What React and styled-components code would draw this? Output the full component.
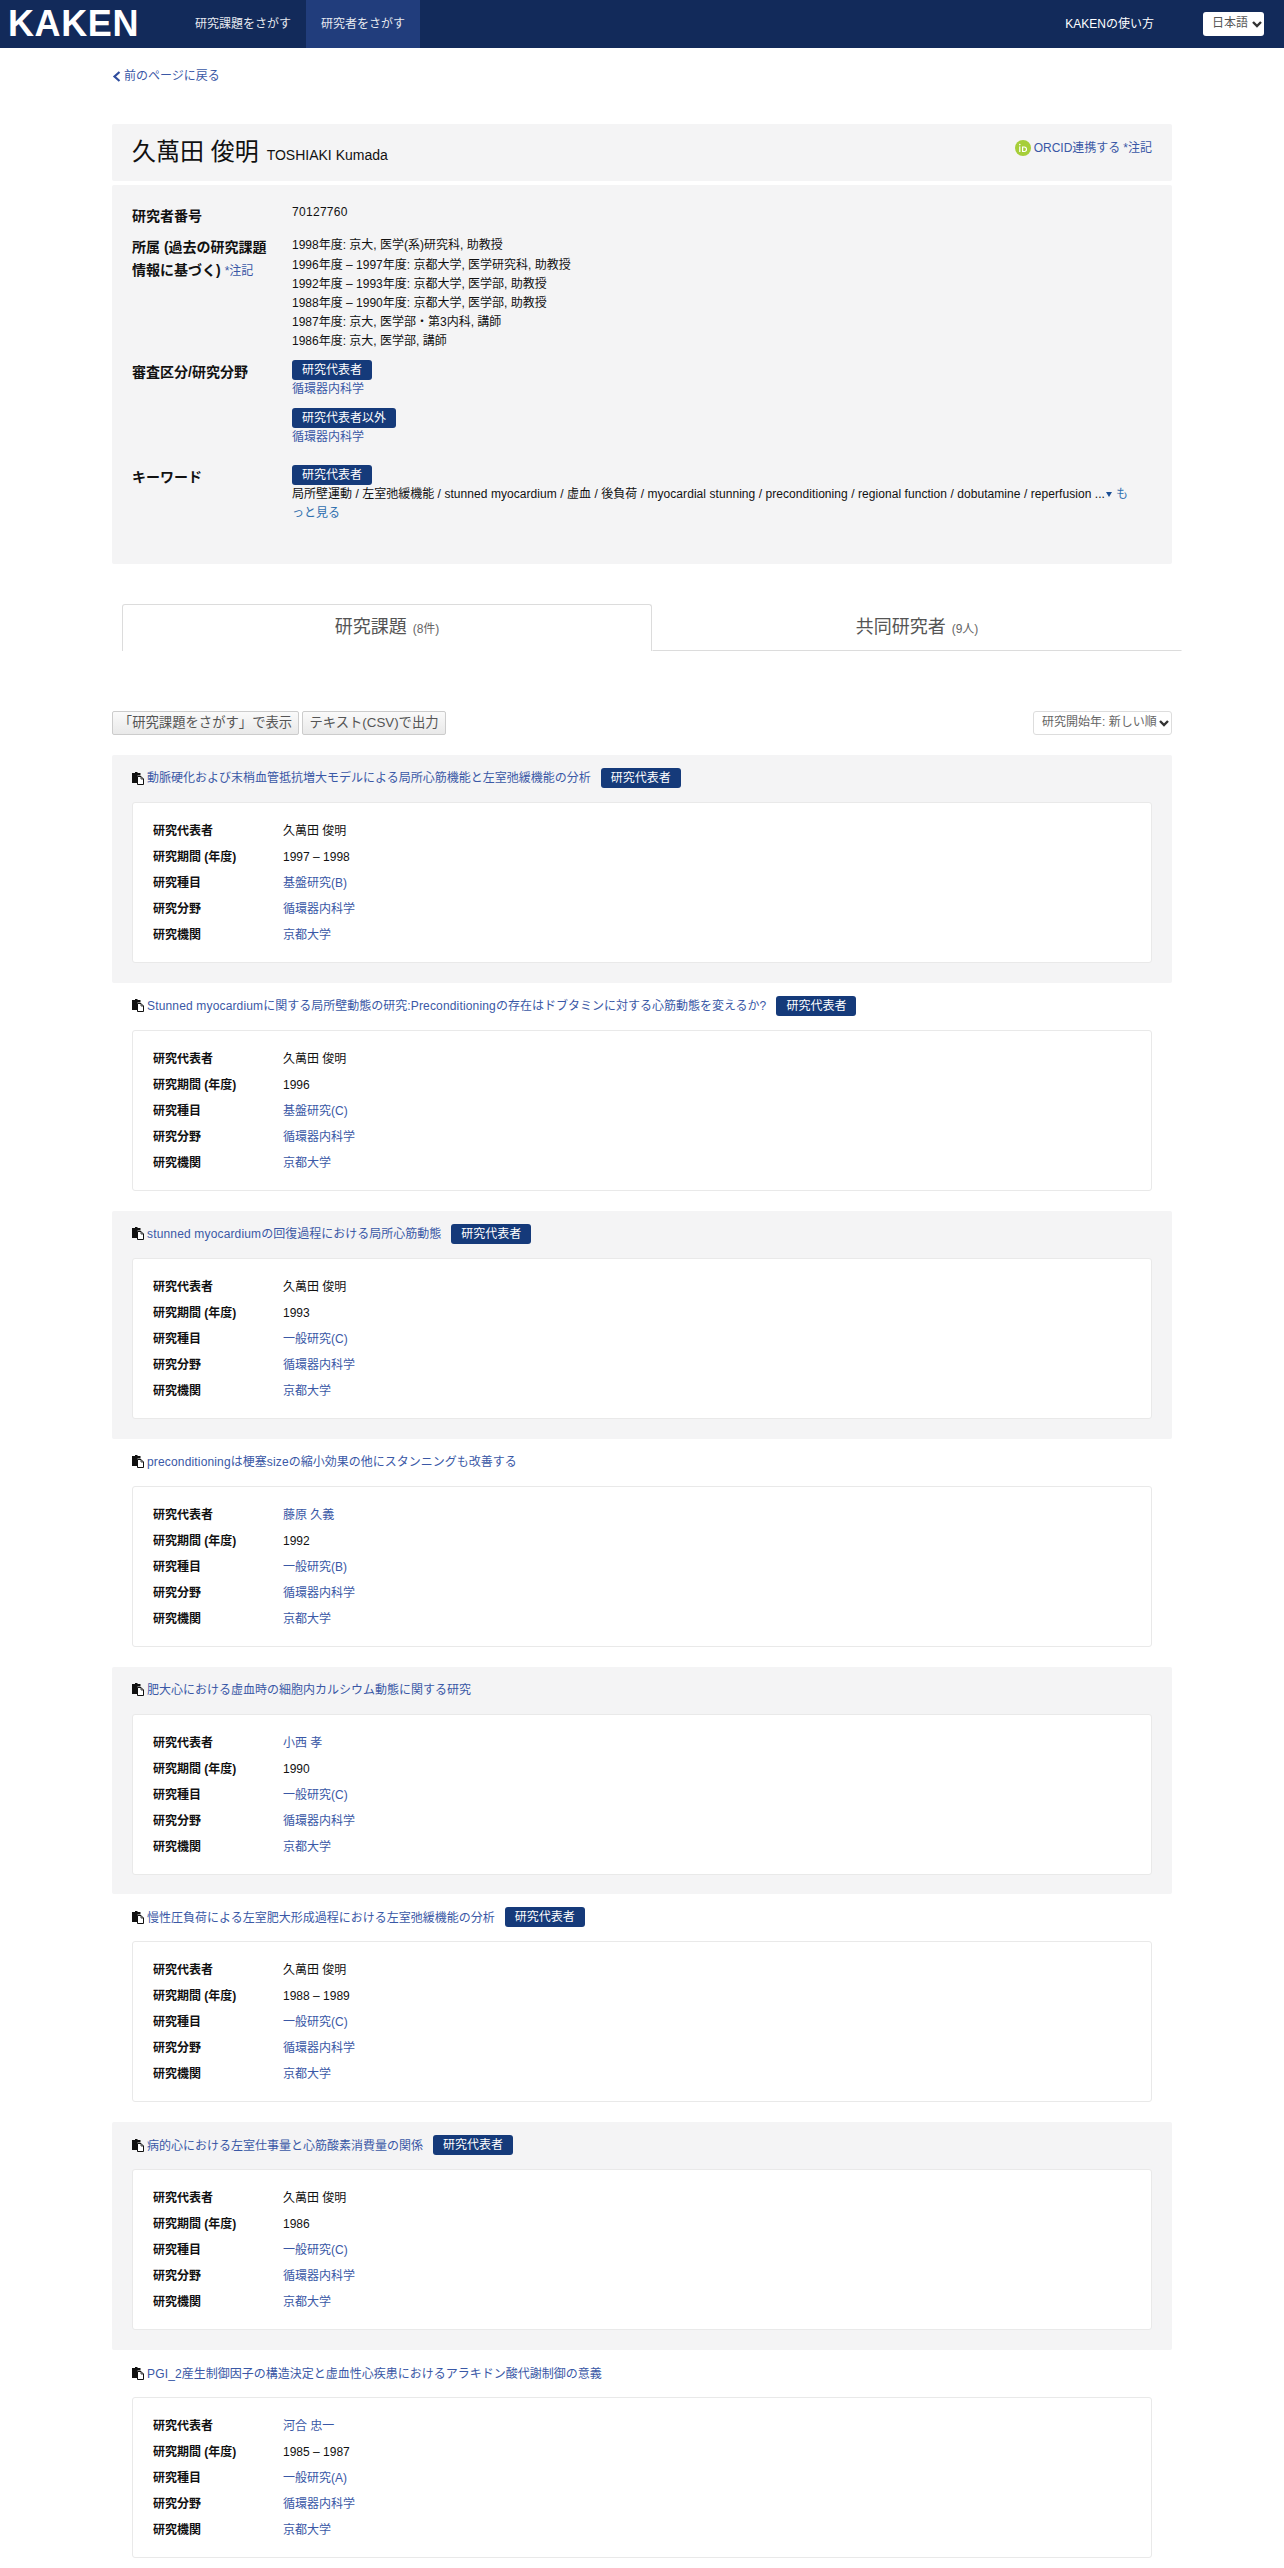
import React from "react";
import styled, { createGlobalStyle } from "styled-components";

const Global = createGlobalStyle`
  html, body { margin: 0; padding: 0; background: #fff; height: 2568px; overflow: hidden; }
  body { font-family: "Liberation Sans", "Noto Sans CJK JP", sans-serif; font-size: 12px; line-height: 19.2px; color: #000; text-rendering: optimizeSpeed; }
  * { box-sizing: border-box; }
`;

const Header = styled.header`
  height: 48px; background: #122a5a; display: flex; align-items: stretch; color: #fff;
`;
const Logo = styled.div`
  width: 180px; padding-left: 8px; font-size: 36px; font-weight: 700; line-height: 48px; letter-spacing: 0.6px; color: #fff;
`;
const Nav = styled.nav`
  display: flex; flex: 1;
`;
const NavItem = styled.a`
  padding: 0 15px; line-height: 48px; color: #e6e9f0; background: ${p => (p.$active ? "#213d7c" : "transparent")};
`;
const HelpLink = styled.a`
  line-height: 48px; color: #fff; margin-right: 49px;
`;
const LangSelect = styled.div`
  width: 61px; height: 24px; margin: 12px 20px 0 0; background: #fff; border-radius: 3px; color: #555;
  display: flex; align-items: center; padding-left: 9px; gap: 4px;
`;
const Page = styled.main`
  width: 1060px; margin-left: 112px;
`;
const BackLink = styled.a`
  display: flex; align-items: center; gap: 1px; height: 19px; margin-top: 19px; color: #3a58a6;
`;
const NamePanel = styled.section`
  margin-top: 38px; height: 57px; background: #f4f4f5; display: flex; align-items: flex-start; justify-content: space-between;
  padding: 0 20px; border-radius: 2px;
`;
const Name = styled.h1`
  margin: 9px 0 0; font-size: 24px; font-weight: 400; line-height: 38px; color: #111;
`;
const NameEn = styled.small`
  font-size: 14px; margin-left: 8px;
`;
const Orcid = styled.a`
  display: flex; align-items: center; gap: 3px; margin-top: 16px; color: #3a58a6; line-height: 16px;
`;
const OrcidText = styled.span`
  white-space: nowrap;
`;
const Note = styled.span`
  color: #3a58a6; margin-left: ${p => p.$gap}px; font-size: 12px; font-weight: 400;
`;
const InfoPanel = styled.section`
  margin-top: 4px; height: 379px; background: #f4f4f5; padding: 18px 20px 0; border-radius: 2px;
`;
const InfoRow = styled.div`
  display: grid; grid-template-columns: 160px 1fr; margin-bottom: ${p => p.$mb || 0}px;
`;
const InfoLabel = styled.div`
  font-size: 14px; font-weight: 700; line-height: 22.4px; padding-top: ${p => p.$pt || 0}px; color: #111; max-width: 145px;
`;
const InfoValue = styled.div`
  font-size: 12px; line-height: 19.2px; color: #111; max-width: 845px;
`;
const ResearcherNumber = styled.span`
  letter-spacing: 0.3px;
`;
const Badge = styled.span`
  display: inline-block; height: 20px; line-height: 20px; padding: 0 10px; background: #153a7a; color: #fff;
  border-radius: 3px; font-size: 12px; white-space: nowrap;
`;
const BadgeLine = styled.div`
  height: 20px; display: flex;
`;
const Area = styled.div`
  margin-bottom: ${p => p.$mb || 0}px;
`;
const Link = styled.a`
  color: #3a58a6;
`;
const More = styled.a`
  color: #2f6fae;
`;
const Latin = styled.span`
  letter-spacing: ${p => p.$ls}px;
`;
const Caret = styled.span`
  display: inline-block; width: 0; height: 0; vertical-align: 1px; margin: 0 4px 0 1px;
  border-left: 3.5px solid transparent; border-right: 3.5px solid transparent; border-top: 5px solid #1b4f95;
`;
const Tabs = styled.div`
  display: flex; width: 1060px; margin: 40px 0 0 10px; height: 47px;
`;
const Tab = styled.div`
  flex: 1; text-align: center; color: #555; font-size: 18px; line-height: 44px; height: 47px;
  border: 1px solid ${p => (p.$active ? "#dcdcdc" : "transparent")};
  border-bottom: ${p => (p.$active ? "none" : "1px solid #dcdcdc")};
  border-radius: 3px 3px 0 0;
`;
const Count = styled.small`
  font-size: 12px; margin-left: 6px; color: #666;
`;
const Toolbar = styled.div`
  display: flex; justify-content: space-between; margin-top: 60px; height: 24px;
`;
const ButtonGroup = styled.div`
  display: flex; gap: 3px;
`;
const Button = styled.button`
  height: 24px; width: ${p => p.$w}px; padding: 0; font: inherit; font-size: 13.33px; line-height: 22px; color: #555; border: 1px solid #ccc; border-radius: 2px;
  background: linear-gradient(#fafafa, #e9e9e9);
`;
const SortSelect = styled.div`
  width: 139px; height: 24px; background: #fff; border: 1px solid #ddd; border-radius: 3px; color: #666;
  display: flex; align-items: center; padding-left: 8px; gap: 2px; white-space: nowrap;
`;
const List = styled.div`
  margin-top: 20px;
`;
const Item = styled.article`
  height: 227.9px; padding: 13px 20px 0; background: ${p => (p.$shaded ? "#f4f4f5" : "#fff")};
  border-radius: 2px;
`;
const TitleRow = styled.div`
  display: flex; align-items: center; height: 20px; margin-bottom: 14px;
`;
const TitleLink = styled.a`
  color: #3a58a6; margin: 2px 0 0 3px;
`;
const TitleBadge = styled(Badge)`
  margin-left: 10px;
`;
const Card = styled.div`
  height: 161px; background: #fff; border: 1px solid #e9e9e9; border-radius: 3px; padding: 15px 20px 13px;
`;
const CardRow = styled.div`
  display: grid; grid-template-columns: 130px 1fr; height: 26px; line-height: 26px;
`;
const CardLabel = styled.div`
  font-weight: 700; color: #111;
`;
const CardValue = styled.div`
  color: #111;
`;

const FileIcon = () => (
  <svg width="12" height="13" viewBox="0 0 12 13" style={{ flex: "none" }}>
    <path d="M0 1H3V0H5.5V1H8.5V3.5H5.5V11H0Z" fill="#111" />
    <path d="M5.5 4.5H9L11.5 7V12.5H5.5Z" fill="#fff" stroke="#111" strokeWidth="1" />
    <path d="M9 4.5V7H11.5" fill="none" stroke="#111" strokeWidth="0.8" />
  </svg>
);
const OrcidIcon = () => (
  <svg width="16" height="16" viewBox="0 0 16 16" style={{ flex: "none" }}>
    <circle cx="8" cy="8" r="8" fill="#a6ce39" />
    <rect x="4.2" y="6.4" width="1.2" height="5.6" fill="#fff" />
    <circle cx="4.8" cy="4.6" r="0.8" fill="#fff" />
    <path d="M7 6.4H9.3C11 6.4 12.1 7.5 12.1 9.2S11 12 9.3 12H7ZM8.2 7.4V11H9.2C10.2 11 10.9 10.3 10.9 9.2S10.2 7.4 9.2 7.4Z" fill="#fff" />
  </svg>
);
const ChevronDown = ({ color = "#333" }) => (
  <svg width="10" height="10" viewBox="0 0 10 10" style={{ flex: "none" }}>
    <path d="M1 3L5 7L9 3" fill="none" stroke={color} strokeWidth="2.4" />
  </svg>
);
const ChevronLeft = () => (
  <svg width="11" height="11" viewBox="0 0 11 11" style={{ flex: "none" }}>
    <path d="M7.5 1L2.5 5.5L7.5 10" fill="none" stroke="#2f4d9e" strokeWidth="2.2" />
  </svg>
);

// Latin runs are rendered with slightly wider advances than the CJK around them.
const Mixed = ({ text, ls }) =>
  text.split(/([\x20-\x7e]+)/).map((run, i) =>
    i % 2 ? <Latin key={i} $ls={ls}>{run}</Latin> : run
  );

const self = "久萬田 俊明";
const projects = [
  { title: "動脈硬化および末梢血管抵抗増大モデルによる局所心筋機能と左室弛緩機能の分析", lead: true, head: self, period: "1997 – 1998", kind: "基盤研究(B)" },
  { title: "Stunned myocardiumに関する局所壁動態の研究:Preconditioningの存在はドブタミンに対する心筋動態を変えるか?", lead: true, head: self, period: "1996", kind: "基盤研究(C)" },
  { title: "stunned myocardiumの回復過程における局所心筋動態", lead: true, head: self, period: "1993", kind: "一般研究(C)" },
  { title: "preconditioningは梗塞sizeの縮小効果の他にスタンニングも改善する", head: "藤原 久義", headLink: true, period: "1992", kind: "一般研究(B)" },
  { title: "肥大心における虚血時の細胞内カルシウム動態に関する研究", head: "小西 孝", headLink: true, period: "1990", kind: "一般研究(C)" },
  { title: "慢性圧負荷による左室肥大形成過程における左室弛緩機能の分析", lead: true, head: self, period: "1988 – 1989", kind: "一般研究(C)" },
  { title: "病的心における左室仕事量と心筋酸素消費量の関係", lead: true, head: self, period: "1986", kind: "一般研究(C)" },
  { title: "PGI_2産生制御因子の構造決定と虚血性心疾患におけるアラキドン酸代謝制御の意義", head: "河合 忠一", headLink: true, period: "1985 – 1987", kind: "一般研究(A)" },
];

const affiliations = [
  "1998年度: 京大, 医学(系)研究科, 助教授",
  "1996年度 – 1997年度: 京都大学, 医学研究科, 助教授",
  "1992年度 – 1993年度: 京都大学, 医学部, 助教授",
  "1988年度 – 1990年度: 京都大学, 医学部, 助教授",
  "1987年度: 京大, 医学部・第3内科, 講師",
  "1986年度: 京大, 医学部, 講師",
];

const keywords = "局所壁運動 / 左室弛緩機能 / stunned myocardium / 虚血 / 後負荷 / myocardial stunning / preconditioning / regional function / dobutamine / reperfusion ...";

export default function App() {
  return (
    <>
      <Global />
      <Header>
        <Logo>KAKEN</Logo>
        <Nav>
          <NavItem>研究課題をさがす</NavItem>
          <NavItem $active>研究者をさがす</NavItem>
        </Nav>
        <HelpLink>KAKENの使い方</HelpLink>
        <LangSelect>日本語<ChevronDown /></LangSelect>
      </Header>
      <Page>
        <BackLink><ChevronLeft />前のページに戻る</BackLink>
        <NamePanel>
          <Name>久萬田 俊明<NameEn>TOSHIAKI Kumada</NameEn></Name>
          <Orcid><OrcidIcon /><OrcidText>ORCID連携する<Note $gap={3}>*注記</Note></OrcidText></Orcid>
        </NamePanel>
        <InfoPanel>
          <InfoRow $mb={9}>
            <InfoLabel $pt={2}>研究者番号</InfoLabel>
            <InfoValue><ResearcherNumber>70127760</ResearcherNumber></InfoValue>
          </InfoRow>
          <InfoRow $mb={8}>
            <InfoLabel>所属 (過去の研究課題情報に基づく)<Note $gap={4}>*注記</Note></InfoLabel>
            <InfoValue>{affiliations.map(a => <div key={a}>{a}</div>)}</InfoValue>
          </InfoRow>
          <InfoRow $mb={18}>
            <InfoLabel $pt={1}>審査区分/研究分野</InfoLabel>
            <InfoValue>
              <Area $mb={9}>
                <BadgeLine><Badge>研究代表者</Badge></BadgeLine>
                <Link>循環器内科学</Link>
              </Area>
              <Area>
                <BadgeLine><Badge>研究代表者以外</Badge></BadgeLine>
                <Link>循環器内科学</Link>
              </Area>
            </InfoValue>
          </InfoRow>
          <InfoRow>
            <InfoLabel $pt={1}>キーワード</InfoLabel>
            <InfoValue>
              <BadgeLine><Badge>研究代表者</Badge></BadgeLine>
              <Mixed text={keywords} ls={0.06} /><Caret /><More>もっと見る</More>
            </InfoValue>
          </InfoRow>
        </InfoPanel>
        <Tabs>
          <Tab $active>研究課題<Count>(8件)</Count></Tab>
          <Tab>共同研究者<Count>(9人)</Count></Tab>
        </Tabs>
        <Toolbar>
          <ButtonGroup>
            <Button $w={187}>「研究課題をさがす」で表示</Button>
            <Button $w={144}>テキスト(CSV)で出力</Button>
          </ButtonGroup>
          <SortSelect>研究開始年: 新しい順<ChevronDown /></SortSelect>
        </Toolbar>
        <List>
          {projects.map((p, i) => (
            <Item key={p.title} $shaded={i % 2 === 0}>
              <TitleRow>
                <FileIcon />
                <TitleLink><Mixed text={p.title} ls={0.16} /></TitleLink>
                {p.lead && <TitleBadge>研究代表者</TitleBadge>}
              </TitleRow>
              <Card>
                <CardRow><CardLabel>研究代表者</CardLabel><CardValue>{p.headLink ? <Link>{p.head}</Link> : p.head}</CardValue></CardRow>
                <CardRow><CardLabel>研究期間 (年度)</CardLabel><CardValue>{p.period}</CardValue></CardRow>
                <CardRow><CardLabel>研究種目</CardLabel><CardValue><Link>{p.kind}</Link></CardValue></CardRow>
                <CardRow><CardLabel>研究分野</CardLabel><CardValue><Link>循環器内科学</Link></CardValue></CardRow>
                <CardRow><CardLabel>研究機関</CardLabel><CardValue><Link>京都大学</Link></CardValue></CardRow>
              </Card>
            </Item>
          ))}
        </List>
      </Page>
    </>
  );
}
